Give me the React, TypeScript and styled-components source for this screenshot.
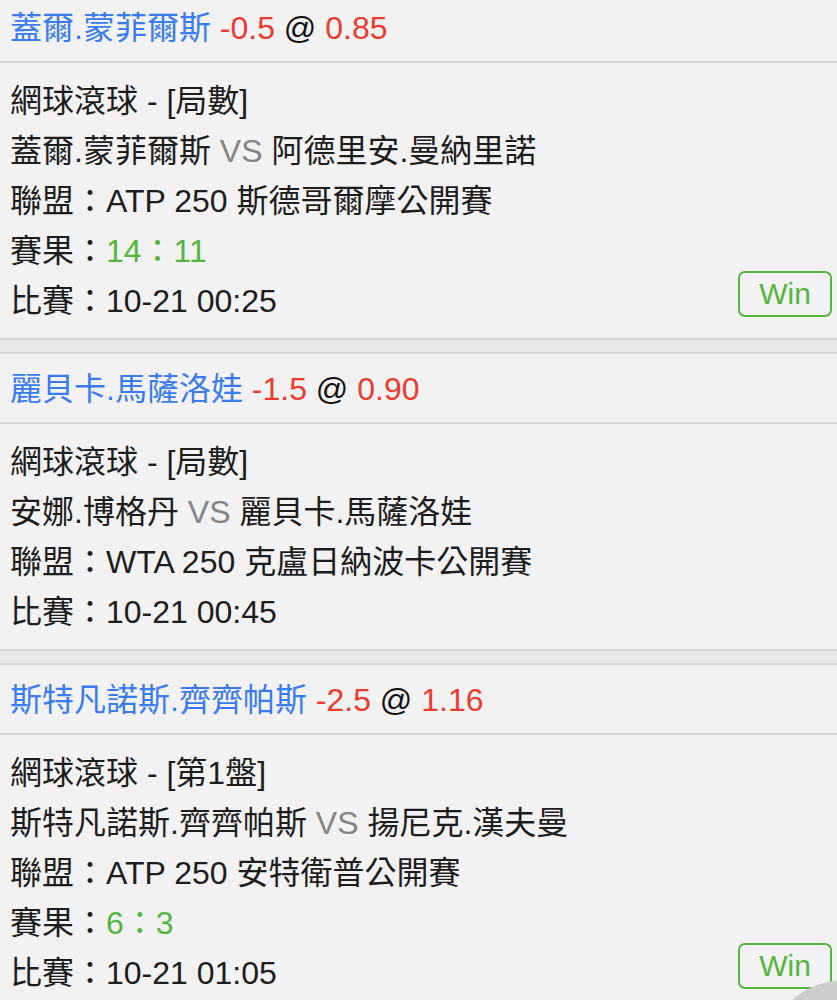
import React from "react";
import styled, { createGlobalStyle } from "styled-components";

const GlobalStyle = createGlobalStyle`
  html, body {
    margin: 0;
    padding: 0;
    background: #f2f2f2;
    overflow: hidden;
  }
  body {
    font-family: "Liberation Sans", Arial, "Noto Sans CJK TC", sans-serif;
    color: #1d1d1d;
  }
`;

const List = styled.div`
  margin-top: -7px;
  background: #e9e9e9;
  display: flex;
  flex-direction: column;
`;

const Card = styled.section`
  background: #f2f2f2;
  border-bottom: 2px solid #d5d5d5;
  & + & {
    margin-top: 12px;
    border-top: 2px solid #d5d5d5;
  }
`;

const Header = styled.div`
  height: 68px;
  line-height: 70px;
  padding: 0 10px;
  font-size: 32px;
  border-bottom: 2px solid #d5d5d5;
  white-space: pre;
`;

const Name = styled.span`
  color: #3a7bef;
`;

const Odds = styled.span`
  color: #ee3a2e;
`;

const At = styled.span`
  color: #111;
`;

const Body = styled.div`
  display: flex;
  justify-content: space-between;
  padding: 13px 5px 12px 10px;
`;

const Info = styled.div`
  display: flex;
  flex-direction: column;
`;

const Line = styled.div`
  height: 50px;
  line-height: 50px;
  font-size: 32px;
  white-space: pre;
`;

const Vs = styled.span`
  color: #858585;
`;

const Score = styled.span`
  color: #55b53f;
`;

const WinBadge = styled.div`
  align-self: flex-end;
  margin-bottom: 9px;
  width: 90px;
  height: 42px;
  border: 2px solid #55b53f;
  border-radius: 7px;
  color: #55b53f;
  font-size: 30px;
  display: flex;
  align-items: center;
  justify-content: center;
`;

const Fab = styled.div`
  position: fixed;
  left: 765px;
  top: 980px;
  width: 160px;
  height: 160px;
  border-radius: 50%;
  background: #cdcdcd;
`;

type Bet = {
  pick: string;
  handicap: string;
  odds: string;
  type: string;
  home: string;
  away: string;
  league: string;
  score?: string;
  time: string;
};

const bets: Bet[] = [
  {
    pick: "蓋爾.蒙菲爾斯",
    handicap: "-0.5",
    odds: "0.85",
    type: "網球滾球 - [局數]",
    home: "蓋爾.蒙菲爾斯",
    away: "阿德里安.曼納里諾",
    league: "ATP 250 斯德哥爾摩公開賽",
    score: "14：11",
    time: "10-21 00:25",
  },
  {
    pick: "麗貝卡.馬薩洛娃",
    handicap: "-1.5",
    odds: "0.90",
    type: "網球滾球 - [局數]",
    home: "安娜.博格丹",
    away: "麗貝卡.馬薩洛娃",
    league: "WTA 250 克盧日納波卡公開賽",
    time: "10-21 00:45",
  },
  {
    pick: "斯特凡諾斯.齊齊帕斯",
    handicap: "-2.5",
    odds: "1.16",
    type: "網球滾球 - [第1盤]",
    home: "斯特凡諾斯.齊齊帕斯",
    away: "揚尼克.漢夫曼",
    league: "ATP 250 安特衛普公開賽",
    score: "6：3",
    time: "10-21 01:05",
  },
];

export default function App() {
  return (
    <>
      <GlobalStyle />
      <List>
        {bets.map((b, i) => (
          <Card key={i}>
            <Header>
              <Name>{b.pick}</Name>
              {" "}
              <Odds>{b.handicap}</Odds>
              {" "}
              <At>@</At>
              {" "}
              <Odds>{b.odds}</Odds>
            </Header>
            <Body>
              <Info>
                <Line>{b.type}</Line>
                <Line>
                  {b.home} <Vs>VS</Vs> {b.away}
                </Line>
                <Line>聯盟：{b.league}</Line>
                {b.score && (
                  <Line>
                    賽果：<Score>{b.score}</Score>
                  </Line>
                )}
                <Line>比賽：{b.time}</Line>
              </Info>
              {b.score && <WinBadge>Win</WinBadge>}
            </Body>
          </Card>
        ))}
      </List>
      <Fab />
    </>
  );
}
